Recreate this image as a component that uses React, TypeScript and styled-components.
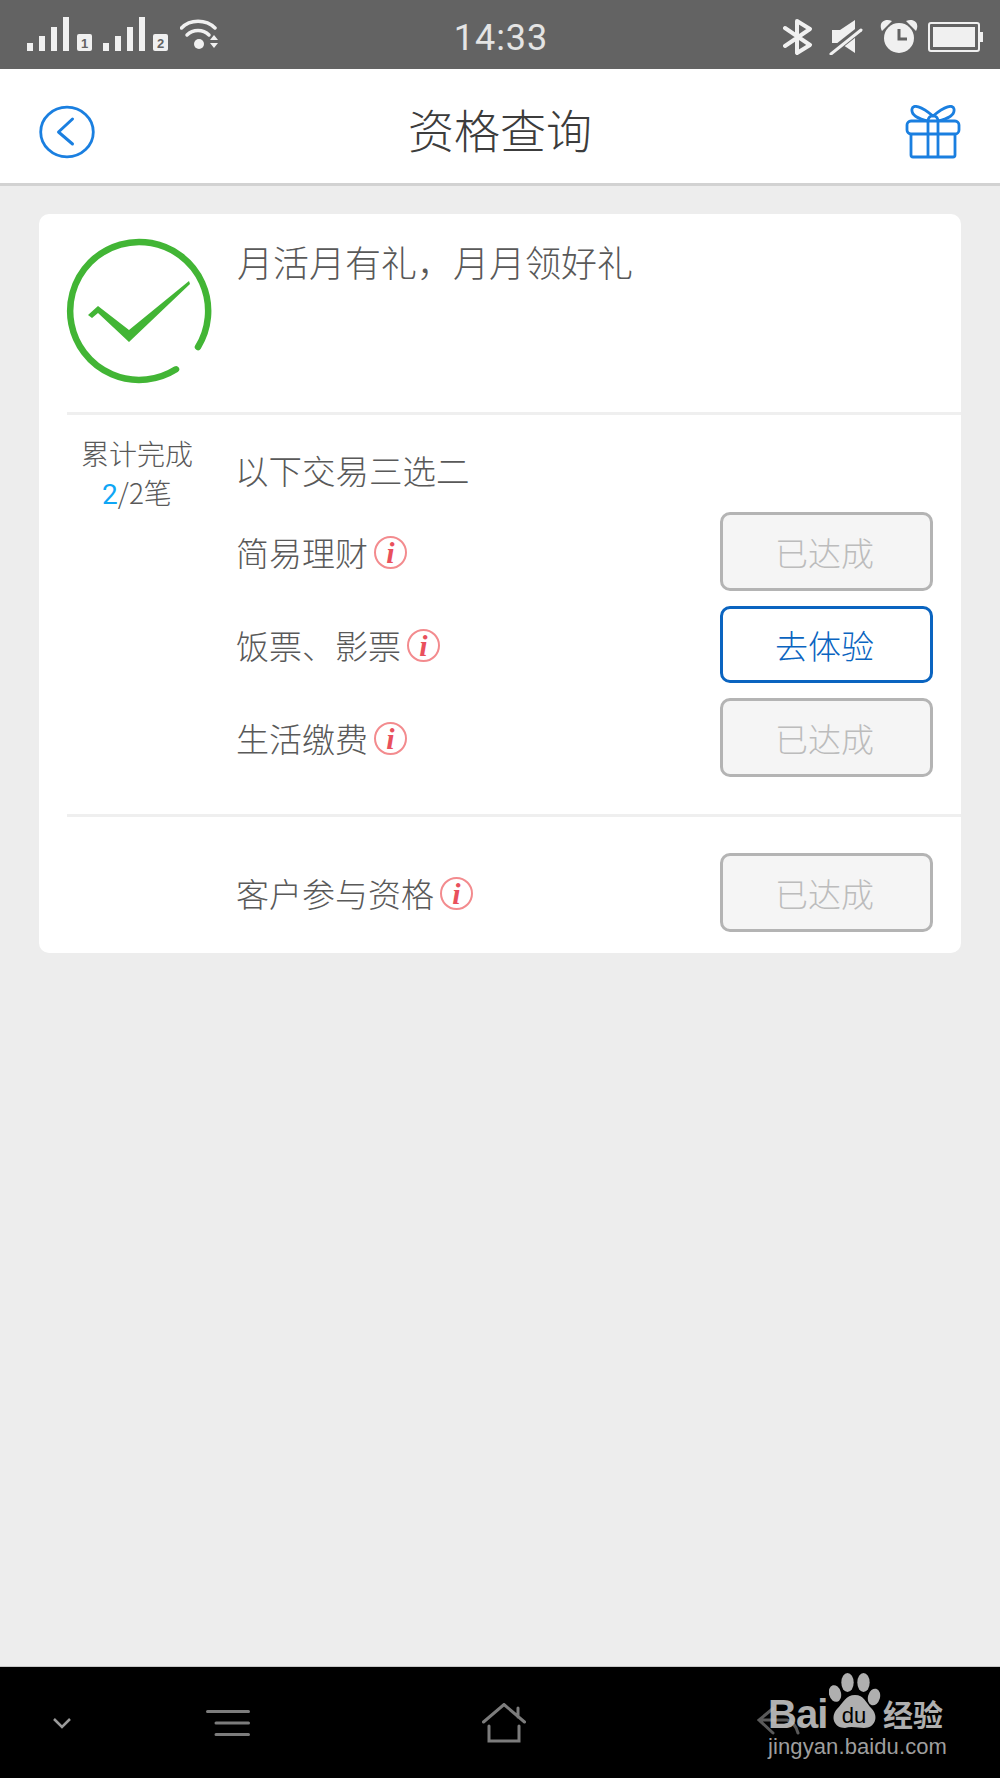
import { FunctionComponent } from "react";
import styled, { createGlobalStyle } from "styled-components";

const GlobalStyle = createGlobalStyle`
  html, body {
    margin: 0;
    padding: 0;
    background: #ededed;
  }
  * {
    box-sizing: border-box;
  }
`;

const Screen = styled.div`
  width: 1000px;
  height: 1778px;
  display: flex;
  flex-direction: column;
  overflow: hidden;
  background: #ededed;
  font-family: "Noto Sans CJK SC", "Noto Sans", sans-serif;
  font-weight: 300;
  color: #595959;
`;

const StatusBar = styled.div`
  height: 69px;
  flex: none;
  display: grid;
  grid-template-columns: 1fr auto 1fr;
  align-items: center;
  background: #636363;
  color: #f0f0f0;
  svg {
    display: block;
  }
`;

const StatusTime = styled.div`
  font-family: Roboto, "Liberation Sans", sans-serif;
  font-weight: 400;
  font-size: 36px;
  letter-spacing: 1px;
  line-height: 69px;
  padding: 4px 0 0 2px;
  color: #e4e4e4;
`;

const StatusLeft = styled.div`
  display: flex;
  align-items: flex-start;
  gap: 10px;
  margin: 17px 0 0 27px;
  height: 52px;
  align-self: start;
`;

const StatusRight = styled.div`
  justify-self: end;
  margin-right: 17px;
`;

const NavBar = styled.div`
  height: 117px;
  flex: none;
  display: flex;
  align-items: center;
  justify-content: space-between;
  padding: 0 39px;
  background: #fff;
  border-bottom: 3px solid #d2d2d2;
  svg {
    display: block;
    margin-top: 12px;
  }
`;

const NavTitle = styled.div`
  font-size: 46px;
  line-height: 60px;
  margin-top: 3px;
  color: #3c3c3c;
`;

const Content = styled.div`
  flex: 1;
  padding: 28px 39px 0;
`;

const Card = styled.div`
  width: 922px;
  background: #fff;
  border-radius: 10px;
  padding-left: 28px;
`;

const CardHead = styled.div`
  height: 198px;
  display: flex;
  gap: 26px;
  padding-top: 25px;
`;

const CardTitle = styled.div`
  font-size: 36px;
  line-height: 36px;
  margin-top: 4px;
`;

const Section = styled.div<{ $pad: string }>`
  display: flex;
  border-top: 3px solid #efefef;
  padding: ${(p) => p.$pad};
`;

const Progress = styled.div`
  width: 140px;
  flex: none;
  font-size: 28px;
  line-height: 39px;
  text-align: center;
`;

const ProgressCount = styled.span`
  font-family: Roboto, "Noto Sans CJK SC", sans-serif;
  font-weight: 400;
  color: #0fa6f5;
`;

const Tasks = styled.div`
  flex: 1;
  margin-left: 30px;
  display: flex;
  flex-direction: column;
  gap: 15px;
`;

const TasksTitle = styled.div`
  font-size: 33.5px;
  line-height: 40px;
  margin: 16px 0 7px -2px;
`;

const TaskRow = styled.div<{ $indent?: number }>`
  display: flex;
  align-items: center;
  justify-content: space-between;
  margin-left: ${(p) => p.$indent ?? 0}px;
`;

const TaskLabel = styled.div`
  display: flex;
  align-items: center;
  gap: 6px;
  margin-left: -1px;
  font-size: 33px;
  line-height: 40px;
`;

const InfoBadge = styled.span`
  width: 33px;
  height: 33px;
  margin-top: 2px;
  border-radius: 50%;
  border: 2px solid #f38b8e;
  display: flex;
  align-items: center;
  justify-content: center;
  font-family: "Liberation Serif", serif;
  font-weight: 700;
  font-style: italic;
  font-size: 30px;
  line-height: 30px;
  color: #e9505c;
`;

const ActionButton = styled.div<{ $active?: boolean }>`
  width: 213px;
  height: ${(p) => (p.$active ? 77 : 79)}px;
  display: flex;
  align-items: center;
  justify-content: center;
  padding-right: 4px;
  border-radius: 10px;
  border: 3px solid ${(p) => (p.$active ? "#0a64c0" : "#b4b4b4")};
  background: ${(p) => (p.$active ? "#fff" : "#f5f5f5")};
  color: ${(p) => (p.$active ? "#0a64c0" : "#bcbcbc")};
  font-size: 33px;
`;

const Footer = styled.div`
  position: relative;
  height: 112px;
  flex: none;
  display: flex;
  align-items: center;
  background: #000;
  border-top: 1px solid #c8c8c8;
`;

const FooterIcon = styled.svg<{ $left: number; $raise?: number }>`
  display: block;
  flex: none;
  margin-left: ${(p) => p.$left}px;
  margin-top: ${(p) => -(p.$raise ?? 0)}px;
`;

const Watermark = styled.div`
  position: absolute;
  left: 768px;
  top: 6px;
  width: 180px;
  color: #c2c2c2;
  opacity: 0.9;
  svg {
    position: absolute;
    left: 61px;
    top: 0;
  }
`;

const BrandRow = styled.div`
  display: flex;
  align-items: flex-end;
  height: 61px;
  font-family: "Liberation Sans", sans-serif;
  font-weight: 700;
`;

const BrandBai = styled.span`
  font-size: 40px;
  line-height: 40px;
  width: 115px;
  letter-spacing: -1px;
`;

const BrandCn = styled.span`
  font-family: "Noto Sans CJK SC", sans-serif;
  font-size: 30px;
  line-height: 36px;
  font-weight: 700;
  white-space: nowrap;
  margin-bottom: 3px;
`;

const BrandDu = styled.text`
  font-family: "Liberation Sans", sans-serif;
  font-weight: 400;
  font-size: 22px;
  fill: #000;
`;

const BrandUrl = styled.div`
  font-family: "Liberation Sans", sans-serif;
  font-size: 22px;
  line-height: 26px;
  letter-spacing: 0.1px;
  white-space: nowrap;
  color: #b0b0b0;
`;

const SimNumber = styled.text`
  font-family: "Liberation Sans", sans-serif;
  font-weight: 700;
  font-size: 13px;
  fill: #636363;
`;

const SignalIcon: FunctionComponent<{ sim: string }> = ({ sim }) => (
  <svg width="66" height="36" viewBox="0 0 66 36">
    <rect x="0" y="26" width="6" height="8" fill="currentColor" />
    <rect x="12" y="19" width="6" height="15" fill="currentColor" />
    <rect x="24" y="10" width="6" height="24" fill="currentColor" />
    <rect x="36" y="0" width="6" height="34" fill="currentColor" />
    <rect x="50" y="17" width="15" height="17" rx="2" fill="currentColor" />
    <SimNumber x="57.5" y="31" textAnchor="middle">
      {sim}
    </SimNumber>
  </svg>
);

const WifiIcon = () => (
  <svg width="39" height="34" viewBox="0 0 39 34" style={{ marginLeft: 1, marginTop: 1 }}>
    <g fill="none" stroke="currentColor" strokeWidth="3.5" strokeLinecap="round">
      <path d="M1.5 10 C10 1 26 1 35 10" />
      <path d="M7 17 C13 11 23 11 29 17" />
    </g>
    <circle cx="19" cy="26" r="5" fill="currentColor" />
    <path d="M30 22 L34 17 L38 22 Z M30 25 L38 25 L34 30 Z" fill="currentColor" />
  </svg>
);

const StatusIcons = () => (
  <svg width="200" height="36" viewBox="0 0 200 36" fill="none">
    {/* bluetooth */}
    <path
      d="M2 9 L27 26 L14 34 L14 2 L27 10 L2 27"
      stroke="#f0f0f0"
      strokeWidth="4"
      strokeLinejoin="round"
      strokeLinecap="round"
    />
    {/* muted speaker */}
    <path d="M49 11 L57 11 L72 1 L72 34 L57 24 L49 24 Z" fill="#f0f0f0" />
    <path d="M46 35 L79 9" stroke="#636363" strokeWidth="7" />
    <path d="M48 35 L78 11" stroke="#f0f0f0" strokeWidth="3" strokeLinecap="round" />
    {/* alarm */}
    <circle cx="116" cy="19" r="15" fill="#f0f0f0" />
    <path d="M99 12 C95 4 101 -1 109 2 Z M133 12 C137 4 131 -1 123 2 Z" fill="#f0f0f0" />
    <path d="M116 10 L116 20 L124 20" stroke="#636363" strokeWidth="3" />
    {/* battery */}
    <rect x="146" y="4" width="50" height="28" rx="2" stroke="#f0f0f0" strokeWidth="2" />
    <rect x="150" y="8" width="42" height="20" fill="#f0f0f0" />
    <rect x="197" y="13" width="3" height="10" fill="#f0f0f0" />
  </svg>
);

const BackIcon = () => (
  <svg width="56" height="54" viewBox="0 0 56 54" fill="none">
    <ellipse cx="28" cy="27" rx="26.3" ry="24.8" stroke="#1a7fe0" strokeWidth="2.8" />
    <path d="M33.5 14 L19.5 27 L33.5 39" stroke="#1a7fe0" strokeWidth="3" strokeLinecap="round" strokeLinejoin="round" />
  </svg>
);

const GiftIcon = () => (
  <svg width="56" height="54" viewBox="0 0 56 54" fill="none" stroke="#1a7fe0" strokeWidth="2.8" strokeLinejoin="round">
    <rect x="2" y="16" width="52" height="13" rx="4" />
    <path d="M6 29 L6 50 Q6 52 8 52 L48 52 Q50 52 50 50 L50 29" />
    <path d="M23 16 L23 52 M33 16 L33 52" />
    <path d="M23 16 C14 14 6 10 7 4 C8 -1 16 1 28 11 C40 1 48 -1 49 4 C50 10 42 14 33 16" />
    <path d="M23 16 C23 9 33 9 33 16" />
  </svg>
);

const CheckIcon = () => (
  <svg width="144" height="144" viewBox="0 0 144 144" fill="none" style={{ flex: "none", overflow: "visible" }}>
    <path
      d="M109 130.3 A 69 69 0 1 1 131 108"
      stroke="#42b535"
      strokeWidth="6.5"
      strokeLinecap="round"
    />
    <path d="M21 76 L31 67 L62 91 L122 42 L123 45 L62 103 L31 74 L25 79 Z" fill="#42b535" />
  </svg>
);

const PawIcon = () => (
  <svg width="52" height="56" viewBox="0 0 52 56">
    <g fill="#c2c2c2">
      <ellipse cx="6" cy="20.5" rx="6" ry="8.5" transform="rotate(-15 6 20.5)" />
      <ellipse cx="18.5" cy="9.5" rx="6.2" ry="9.5" />
      <ellipse cx="34.5" cy="9.5" rx="6.2" ry="9.5" />
      <ellipse cx="45" cy="24" rx="6" ry="8.5" transform="rotate(15 45 24)" />
      <path d="M26 22 C35 22 37 30 43 36 C50 44 46 55 35 55 C30 55 22 53 16 55 C5 55 1 44 8 36 C14 30 17 22 26 22 Z" />
    </g>
    <BrandDu x="25" y="50" textAnchor="middle">
      du
    </BrandDu>
  </svg>
);

const App = () => (
  <Screen>
    <GlobalStyle />
    <StatusBar>
      <StatusLeft>
        <SignalIcon sim="1" />
        <SignalIcon sim="2" />
        <WifiIcon />
      </StatusLeft>
      <StatusTime>14:33</StatusTime>
      <StatusRight>
        <StatusIcons />
      </StatusRight>
    </StatusBar>
    <NavBar>
      <BackIcon />
      <NavTitle>资格查询</NavTitle>
      <GiftIcon />
    </NavBar>
    <Content>
      <Card>
        <CardHead>
          <CheckIcon />
          <CardTitle>月活月有礼，月月领好礼</CardTitle>
        </CardHead>
        <Section $pad="19px 28px 37px 0">
          <Progress>
            累计完成
            <br />
            <ProgressCount>2</ProgressCount>/2笔
          </Progress>
          <Tasks>
            <TasksTitle>以下交易三选二</TasksTitle>
            <TaskRow>
              <TaskLabel>
                简易理财
                <InfoBadge>i</InfoBadge>
              </TaskLabel>
              <ActionButton>已达成</ActionButton>
            </TaskRow>
            <TaskRow>
              <TaskLabel>
                饭票、影票
                <InfoBadge>i</InfoBadge>
              </TaskLabel>
              <ActionButton $active>去体验</ActionButton>
            </TaskRow>
            <TaskRow>
              <TaskLabel>
                生活缴费
                <InfoBadge>i</InfoBadge>
              </TaskLabel>
              <ActionButton>已达成</ActionButton>
            </TaskRow>
          </Tasks>
        </Section>
        <Section $pad="36px 28px 21px 0">
          <Tasks>
            <TaskRow $indent={140}>
              <TaskLabel>
                客户参与资格
                <InfoBadge>i</InfoBadge>
              </TaskLabel>
              <ActionButton>已达成</ActionButton>
            </TaskRow>
          </Tasks>
        </Section>
      </Card>
    </Content>
    <Footer>
      <FooterIcon $left={53} width="18" height="12" viewBox="0 0 18 12" fill="none">
        <path d="M1 2 L9 10 L17 2" stroke="#9a9a9a" strokeWidth="2.5" />
      </FooterIcon>
      <FooterIcon $left={135} width="44" height="28" viewBox="0 0 44 28" fill="none" stroke="#7c7c7c" strokeWidth="3" strokeLinecap="round">
        <path d="M1.5 2.5 L42.5 2.5 M10 14 L42.5 14 M10 25.5 L42.5 25.5" />
      </FooterIcon>
      <FooterIcon $left={232} width="44" height="40" viewBox="0 0 44 40" fill="none" stroke="#7c7c7c" strokeWidth="3" strokeLinecap="round">
        <path d="M1.5 19 L22 1.5 L42.5 19 M36 14 L36 5 M7 23 L7 38 L37 38 L37 23" />
      </FooterIcon>
      <FooterIcon $left={231} $raise={4} width="44" height="28" viewBox="0 0 44 28" fill="none" stroke="#5a5a5a" strokeWidth="3" strokeLinecap="round">
        <path d="M16 1.5 L2 13 L16 26 M2 13 L30 13 Q38 15 41 26" />
      </FooterIcon>
      <Watermark>
        <PawIcon />
        <BrandRow>
          <BrandBai>Bai</BrandBai>
          <BrandCn>经验</BrandCn>
        </BrandRow>
        <BrandUrl>jingyan.baidu.com</BrandUrl>
      </Watermark>
    </Footer>
  </Screen>
);

export default App;
